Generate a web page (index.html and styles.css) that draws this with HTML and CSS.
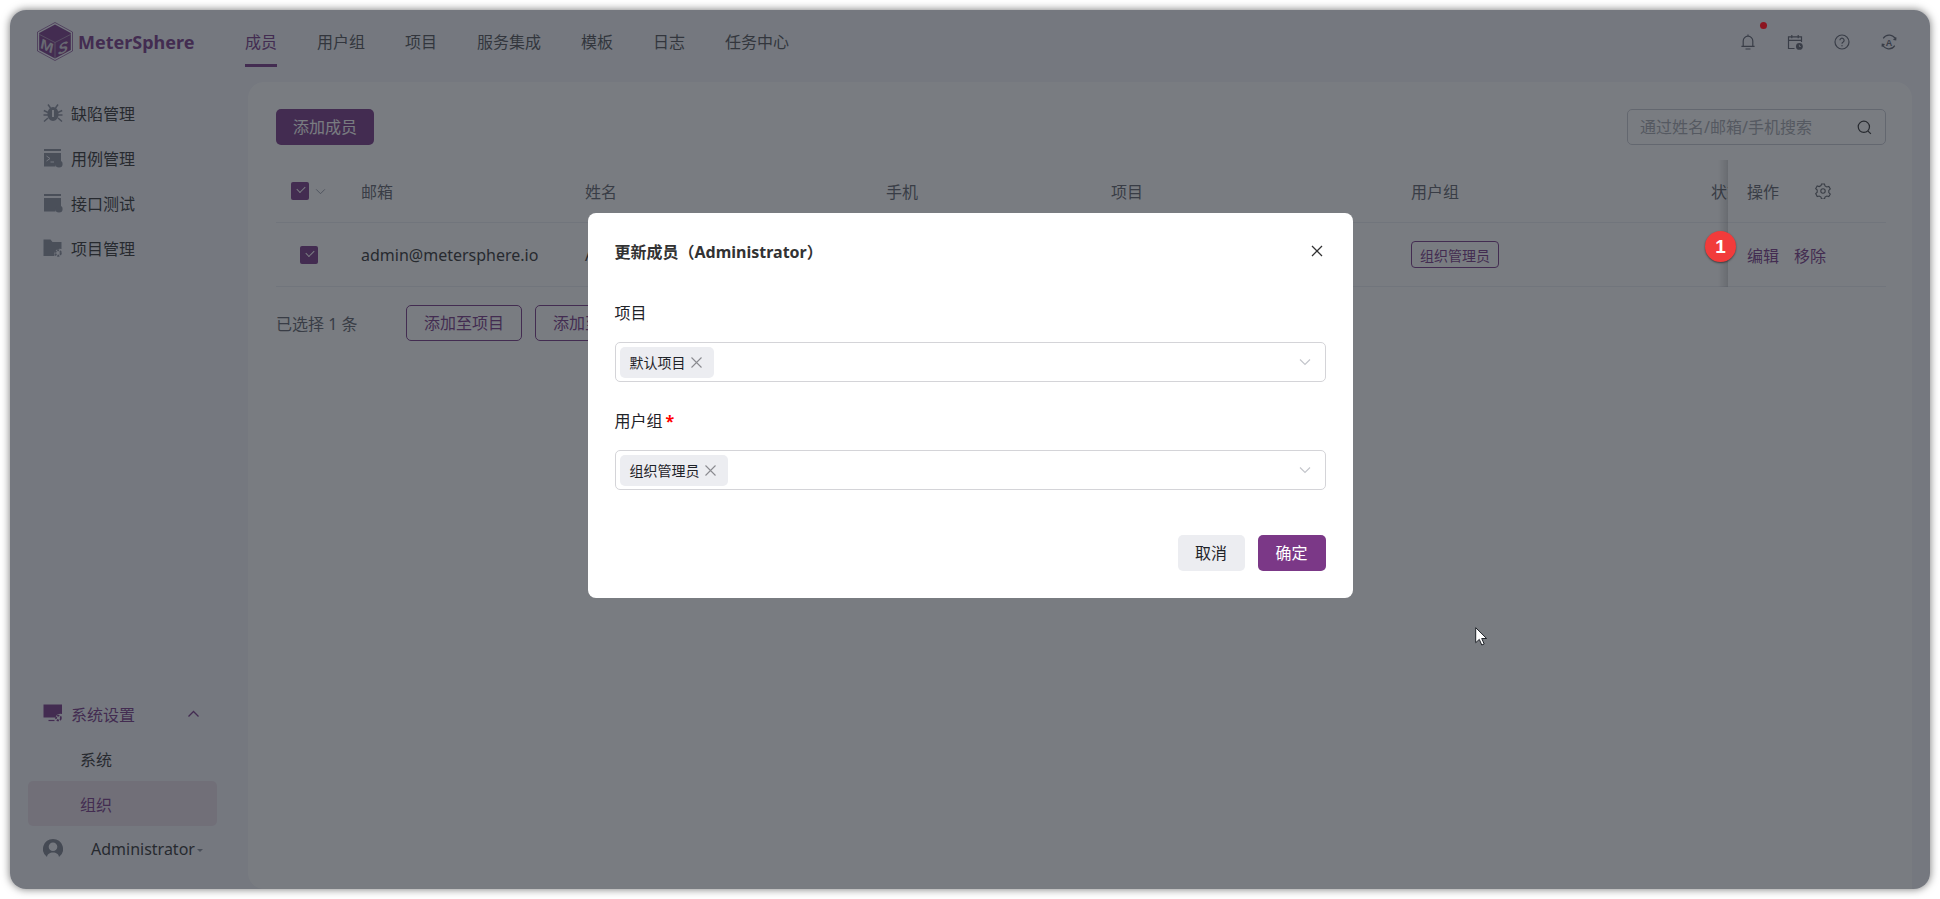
FILE: index.html
```html
<!DOCTYPE html>
<html lang="zh-CN">
<head>
<meta charset="utf-8">
<title>MeterSphere</title>
<link rel="stylesheet" href="styles.css">
</head>
<body>
<div class="window">
  <header class="topbar">
    <div class="brand">
      <svg class="logo" viewBox="0 0 36 39">
        <polygon points="18,0.5 35.5,10 35.5,29 18,38.500 0.5,29 0.5,10" fill="none" stroke="#783887" stroke-width="0.7"/>
        <polygon points="18,2.5 33.8,11 33.8,28 18,36.500 2.200,28 2.200,11" fill="#783887"/>
        <polyline points="2.500,12.500 18,20.500 33.500,12.500" fill="none" stroke="#c9c3cf" stroke-width="0.6"/>
        <line x1="18" y1="20.500" x2="18" y2="36" stroke="#c9c3cf" stroke-width="0.6"/>
        <text class="logo-letter" transform="translate(3.500 26) skewY(26)">M</text>
        <text class="logo-letter" transform="translate(21 33.500) skewY(-26)">S</text>
      </svg>
      <span class="brand-name">MeterSphere</span>
    </div>
    <nav class="nav">
      <a class="nav-item active">成员</a>
      <a class="nav-item">用户组</a>
      <a class="nav-item">项目</a>
      <a class="nav-item">服务集成</a>
      <a class="nav-item">模板</a>
      <a class="nav-item">日志</a>
      <a class="nav-item">任务中心</a>
    </nav>
    <div class="tools">
      <svg class="tool" viewBox="0 0 16 16"><path d="M8 .6V2M3.200 12.400V7a4.800 4.800 0 0 1 9.600 0v5.400M1.400 12.400h13.200M5.500 15h5"/></svg>
      <svg class="tool" viewBox="0 0 16 16"><path d="M7.500 14.500H1.500V2.800h13V8M1.500 6.400h13M4.800 1v3.200M11.200 1v3.200"/><circle class="solid" cx="12.400" cy="12.400" r="3.400"/><path class="clock" d="M12.400 10.800v1.700h1.400"/></svg>
      <svg class="tool" viewBox="0 0 16 16"><circle cx="8" cy="8" r="7"/><path d="M5.900 6.200a2.100 2.100 0 1 1 3.300 1.800c-.8.500-1.200.9-1.200 1.800"/><circle class="solid" cx="8" cy="11.800" r=".7"/></svg>
      <svg class="tool" viewBox="0 0 16 16"><path d="M2.200 4.400A7 7 0 0 1 14.600 5.600M13.800 11.600A7 7 0 0 1 1.400 10.400M14.900 3.400l-.2 2.400-2.300-.5M1.100 12.600l.2-2.400 2.300.5"/><text class="tool-letter" x="8" y="11.500">A</text></svg>
    </div>
  </header>
  <div class="main">
    <aside class="sidebar">
      <ul class="menu">
        <li class="menu-row">
          <svg class="menu-icon" viewBox="0 0 20 20"><ellipse class="fill" cx="10" cy="11" rx="5.600" ry="7"/><path class="legs" d="M5 1.500 7.500 5M15 1.500 12.500 5M.8 7.500 5 9.500M19.200 7.500 15 9.500M.5 12H5M19.500 12H15M1 18.500 5 15M19 18.500 15 15"/><rect x="9" y="7" width="2" height="7" fill="#f4f5fb"/></svg>
          <span>缺陷管理</span>
        </li>
        <li class="menu-row">
          <svg class="menu-icon" viewBox="0 0 20 20"><rect class="fill" x="1" y="1" width="17" height="2"/><path class="fill" d="M1 5h17v8.500a5 5 0 0 0-5.500 5H1z"/><path class="prompt" d="M3.500 8 7 10.500 3.500 13M7.500 14H11"/><circle class="fill" cx="16" cy="16" r="3.600"/></svg>
          <span>用例管理</span>
        </li>
        <li class="menu-row">
          <svg class="menu-icon" viewBox="0 0 20 20"><rect class="fill" x="1" y="1" width="17" height="2"/><path class="fill" d="M1 5h17v8.500a5 5 0 0 0-5.500 5H1z"/><circle class="fill" cx="16" cy="16" r="3.600"/></svg>
          <span>接口测试</span>
        </li>
        <li class="menu-row">
          <svg class="menu-icon" viewBox="0 0 20 20"><path class="fill" d="M.5 1.500h7l2 2.500h9v7a5.500 5.500 0 0 0-7 7H.5z"/><circle class="ring" cx="15" cy="15" r="2.800"/></svg>
          <span>项目管理</span>
        </li>
      </ul>
      <ul class="menu">
        <li class="menu-row current">
          <svg class="menu-icon" viewBox="0 0 20 20"><path class="fill-primary" d="M.5.5H19v9.500a5 5 0 0 0-6.500 3.500H.5z"/><path class="stroke-primary" d="M5.500 16.500h6"/><circle class="ring-primary" cx="15.500" cy="14" r="2.400"/></svg>
          <span>系统设置</span>
          <svg class="menu-caret" viewBox="0 0 12 8"><path d="M1 6.500 6 1.500l5 5"/></svg>
        </li>
        <li class="menu-row sub">系统</li>
        <li class="menu-row sub selected">组织</li>
        <li class="menu-row user">
          <svg class="avatar" viewBox="0 0 20 20"><path d="M10 0a10 10 0 0 0-6 18c.3-2.800 2.800-4.500 6-4.500s5.700 1.700 6 4.500A10 10 0 0 0 10 0zm0 12a4.300 4.300 0 1 1 0-8.600 4.300 4.300 0 0 1 0 8.600z"/></svg>
          <span class="user-name">Administrator</span>
          <i class="user-caret"></i>
        </li>
      </ul>
    </aside>
    <section class="panel">
      <div class="toolbar">
        <button class="btn primary">添加成员</button>
        <label class="search">
          <input class="search-input" type="text" placeholder="通过姓名/邮箱/手机搜索">
          <svg class="search-icon" viewBox="0 0 16 16"><circle cx="7.300" cy="7.300" r="6"/><path d="m11.800 11.800 3 3"/></svg>
        </label>
      </div>
      <div class="table">
        <div class="table-scroll">
          <div class="tr head">
            <div class="td c-check">
              <span class="check"></span>
              <svg class="check-arrow" viewBox="0 0 12 8"><path d="M1 1.500 6 6.500l5-5"/></svg>
            </div>
            <div class="td c-mail">邮箱</div>
            <div class="td c-name">姓名</div>
            <div class="td c-phone">手机</div>
            <div class="td c-project">项目</div>
            <div class="td c-group">用户组</div>
            <div class="td c-state">状态</div>
          </div>
          <div class="tr body">
            <div class="td c-check body-check"><span class="check"></span></div>
            <div class="td c-mail">admin@metersphere.io</div>
            <div class="td c-name">Administrator</div>
            <div class="td c-phone"></div>
            <div class="td c-project">默认项目</div>
            <div class="td c-group"><span class="role-tag">组织管理员</span></div>
            <div class="td c-state"></div>
          </div>
        </div>
        <div class="table-fixed">
          <div class="tr head">
            <span>操作</span>
            <svg class="gear" viewBox="0 0 16 16"><path d="M6.500 1h3l.5 2 1.800 1 2-.6 1.500 2.600-1.500 1.400v2.200l1.500 1.400-1.500 2.600-2-.6-1.800 1-.5 2h-3l-.5-2-1.800-1-2 .6L.7 10.600l1.500-1.400V7L.7 5.600 2.200 3l2 .6L6 2.600z"/><circle cx="8" cy="8" r="2.200"/></svg>
          </div>
          <div class="tr body actions">
            <a class="link">编辑</a>
            <a class="link">移除</a>
          </div>
        </div>
      </div>
      <div class="batch">
        <span class="batch-count">已选择 1 条</span>
        <button class="btn outline">添加至项目</button>
        <button class="btn outline">添加至用户组</button>
      </div>
    </section>
  </div>
  <div class="mask">
    <div class="modal">
      <div class="modal-head">
        <h2 class="modal-title">更新成员（Administrator）</h2>
        <svg class="modal-close" viewBox="0 0 12 12"><path d="M1 1l10 10M11 1 1 11"/></svg>
      </div>
      <div class="field-label">项目</div>
      <div class="select">
        <span class="tag">默认项目<svg class="tag-x" viewBox="0 0 11 11"><path d="M.5.500l10 10M10.500.500l-10 10"/></svg></span>
        <svg class="select-arrow" viewBox="0 0 12 8"><path d="M1 1.500 6 6.500l5-5"/></svg>
      </div>
      <div class="field-label second">用户组<em class="required">*</em></div>
      <div class="select">
        <span class="tag">组织管理员<svg class="tag-x" viewBox="0 0 11 11"><path d="M.5.500l10 10M10.500.500l-10 10"/></svg></span>
        <svg class="select-arrow" viewBox="0 0 12 8"><path d="M1 1.500 6 6.500l5-5"/></svg>
      </div>
      <div class="modal-foot">
        <button class="btn cancel">取消</button>
        <button class="btn confirm">确定</button>
      </div>
    </div>
  </div>
  <i class="notice-dot"></i>
  <span class="step-badge">1</span>
  <svg class="pointer" viewBox="0 0 12 19"><path d="M.7.700v15l3.600-3.300 2.500 5.600 2.400-1-2.500-5.500h4.900z"/></svg>
</div>
</body>
</html>
```
FILE: styles.css
```css
* { box-sizing: border-box; }
html, body { height: 100%; margin: 0; }
body {
  padding: 10px;
  background: #fff;
  overflow: hidden;
  font-family: "Noto Sans", "Noto Sans CJK SC", sans-serif;
  font-size: 16px;
  color: #323233;
}
ul { list-style: none; margin: 0; padding: 0; }
button { font: inherit; cursor: pointer; }

.window {
  position: relative;
  height: 879px;
  display: flex;
  flex-direction: column;
  background: #f4f5fb;
  border-radius: 16px;
  box-shadow: 0 0 8px rgba(0, 0, 0, .55);
  overflow: hidden;
}

/* top bar */
.topbar { height: 72px; flex: none; display: flex; align-items: stretch; padding: 0 33px 0 27px; }
.brand { display: flex; align-items: center; gap: 5px; width: 208px; padding-bottom: 9px; }
.logo { width: 36px; height: 39px; flex: none; }
.logo-letter { font: italic 700 15px "Liberation Sans", sans-serif; fill: #d5cfda; }
.brand-name { font-size: 18px; font-weight: 700; color: #783887; }
.nav { display: flex; gap: 40px; flex: 1; }
.nav-item { position: relative; line-height: 64px; height: 57px; color: #505256; }
.nav-item.active { color: #783887; }
.nav-item.active::after {
  content: ""; position: absolute; left: 0; right: 0; bottom: 0; height: 3px; background: #783887;
}
.tools { display: flex; align-items: center; gap: 31px; padding-bottom: 9px; }
.tool { width: 16px; height: 16px; fill: none; stroke: #5f626e; stroke-width: 1.200; }
.tool .solid { fill: #5f626e; stroke: none; }
.tool .clock { stroke: #f4f5fb; stroke-width: .800; }
.tool-letter { font: 700 9px "Liberation Sans", sans-serif; text-anchor: middle; fill: #5f626e; stroke: none; }

/* sidebar */
.main { flex: 1; display: flex; min-height: 0; }
.sidebar {
  width: 238px; flex: none; display: flex; flex-direction: column; justify-content: space-between;
  padding: 8px 31px 19px 18px;
}
.menu-row { height: 45px; display: flex; align-items: center; gap: 8px; padding-left: 15px; position: relative; }
.menu-icon { width: 20px; height: 20px; flex: none; }
.fill { fill: #8a8e9c; }
.legs { fill: none; stroke: #8a8e9c; stroke-width: 1.500; }
.prompt { fill: none; stroke: #f4f5fb; stroke-width: 1; }
.ring { fill: none; stroke: #8a8e9c; stroke-width: 2; stroke-dasharray: 2 1; }
.fill-primary { fill: #783887; }
.stroke-primary { fill: none; stroke: #783887; stroke-width: 1.200; }
.ring-primary { fill: none; stroke: #783887; stroke-width: 1.800; stroke-dasharray: 2 1; }
.menu-row.current { color: #783887; }
.menu-caret { width: 13px; height: 8px; margin-left: 44px; fill: none; stroke: #783887; stroke-width: 1.300; }
.menu-row.sub { padding-left: 52px; }
.menu-row.selected { background: #ebdfe9; border-radius: 5px; color: #783887; }
.menu-row.user { height: 44px; gap: 0; padding-top: 2px; }
.avatar { width: 20px; height: 20px; fill: #7e828e; flex: none; margin-right: 28px; }
.user-caret {
  width: 0; height: 0; margin: 2px 0 0 2px;
  border: 3px solid transparent; border-top-color: #8a8e9c; border-bottom: 0;
}

/* panel */
.panel {
  flex: 1; min-width: 0; margin-right: 18px; background: #fff; border-radius: 16px 16px 0 16px;
  padding: 27px 26px 0 28px;
}
.toolbar { display: flex; justify-content: space-between; height: 36px; }
.btn { height: 36px; border-radius: 5px; border: 1px solid transparent; padding: 0 16px; line-height: 1; }
.btn.primary { background: #783887; color: #fff; }
.search {
  width: 259px; display: flex; align-items: center; padding: 0 13px 0 12px;
  border: 1px solid #c9cad2; border-radius: 5px;
}
.search-input { flex: 1; min-width: 0; border: 0; outline: 0; padding: 0; background: transparent; font: inherit; }
.search-input::placeholder { color: #a6a8ae; opacity: 1; }
.search-icon { width: 15px; height: 15px; flex: none; fill: none; stroke: #323233; stroke-width: 1.300; }

/* table */
.table { display: flex; margin-top: 15px; }
.table-scroll { flex: 1; min-width: 0; overflow: hidden; }
.tr { display: flex; align-items: center; border-bottom: 1px solid #eceef3; white-space: nowrap; }
.tr.head { height: 63px; color: #60636b; }
.tr.body { height: 64px; }
.c-check { width: 85px; flex: none; display: flex; align-items: center; padding-left: 15px; }
.c-mail { width: 224px; flex: none; }
.c-name { width: 301px; flex: none; }
.c-phone { width: 225px; flex: none; }
.c-project { width: 300px; flex: none; }
.c-group { width: 300px; flex: none; }
.c-state { width: 60px; flex: none; }
.body-check { padding-left: 24px; }
.check {
  position: relative; width: 18px; height: 18px; border-radius: 2px; background: #783887; flex: none;
}
.check::after {
  content: ""; position: absolute; left: 5.500px; top: 4px; width: 7px; height: 4px;
  border-left: 1.800px solid #fff; border-bottom: 1.800px solid #fff; transform: rotate(-45deg);
}
.check-arrow { width: 11px; height: 7px; margin-left: 6px; fill: none; stroke: #8a8e9c; stroke-width: 1; }
.role-tag {
  display: inline-flex; align-items: center; height: 27px; padding: 0 8px;
  border: 1px solid #783887; border-radius: 4px; color: #783887; font-size: 14px;
}
.table-fixed { position: relative; width: 158px; flex: none; background: #fff; }
.table-fixed::before {
  content: ""; position: absolute; top: 0; bottom: 0; left: -10px; width: 10px;
  background: linear-gradient(to right, rgba(0, 0, 0, 0), rgba(0, 0, 0, .16));
}
.table-fixed .tr { padding-left: 19px; }
.gear { width: 16px; height: 16px; margin-left: 36px; fill: none; stroke: #60636b; stroke-width: 1.100; }
.actions { gap: 15px; }
.link { color: #783887; }

.batch { display: flex; align-items: center; margin-top: 18px; }
.batch-count { width: 130px; color: #60636b; }
.btn.outline { padding: 0 17px; background: #fff; color: #783887; border-color: #783887; margin-right: 13px; }

/* modal */
.mask {
  position: absolute; inset: 0; padding-top: 203px;
  display: flex; justify-content: center; align-items: flex-start;
  background: rgba(31, 36, 45, .6);
}
.modal { width: 765px; background: #fff; border-radius: 8px; padding: 26px 27px 27px; color: #1f2329; }
.modal-head { display: flex; justify-content: space-between; align-items: center; height: 24px; }
.modal-title { margin: 0; font-size: 16px; font-weight: 700; color: #323233; }
.modal-close { width: 12px; height: 12px; margin-right: 3px; fill: none; stroke: #323233; stroke-width: 1.300; }
.field-label { height: 24px; line-height: 24px; margin: 38px 0 17px; }
.field-label.second { margin-top: 27px; }
.required { font-style: normal; font-weight: 700; color: #f00; margin-left: 3px; }
.select {
  height: 40px; display: flex; align-items: center; justify-content: space-between;
  padding: 0 14px 0 4px; border: 1px solid #d4d4d8; border-radius: 5px;
}
.tag {
  height: 31px; display: inline-flex; align-items: center; gap: 5px; padding: 0 12px 0 10px;
  background: #ecedf1; border-radius: 5px; font-size: 14px;
}
.tag-x { width: 11px; height: 11px; fill: none; stroke: #8a8b90; stroke-width: 1.100; }
.select-arrow { width: 12px; height: 8px; fill: none; stroke: #c4c6cc; stroke-width: 1.200; }
.modal-foot { display: flex; justify-content: flex-end; gap: 13px; margin-top: 45px; }
.btn.cancel { width: 67px; padding: 0; background: #ecedf1; color: #1f2329; }
.btn.confirm { width: 68px; padding: 0; background: #7b3887; color: #fff; }

/* things above the mask */
.notice-dot {
  position: absolute; left: 1750px; top: 12px; width: 7px; height: 7px; border-radius: 50%; background: #8c1520;
}
.step-badge {
  position: absolute; left: 1695px; top: 221px; width: 31px; height: 31px; border-radius: 50%;
  display: flex; align-items: center; justify-content: center;
  background: #f23b3b; color: #fff; font: 700 19px "Liberation Sans", sans-serif;
  box-shadow: 0 1px 2px rgba(0, 0, 0, .5);
}
.pointer {
  position: absolute; left: 1465px; top: 617px; width: 12px; height: 19px;
  fill: #fff; stroke: #1f2329; stroke-width: 1;
}
```
